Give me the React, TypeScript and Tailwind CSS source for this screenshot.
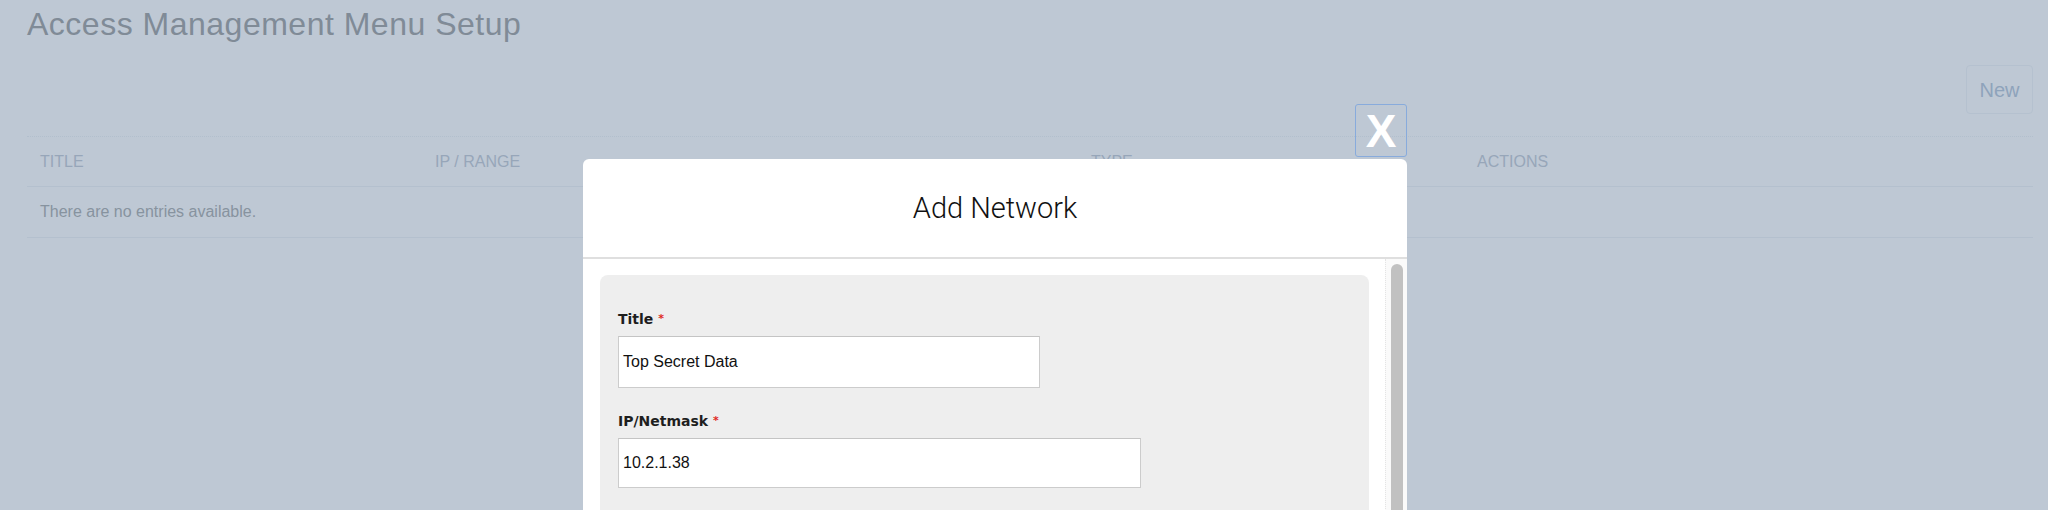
import React from 'react';

const columns = [
  { label: 'TITLE', width: 'w-[395px]' },
  { label: 'IP / RANGE', width: 'w-[656px]' },
  { label: 'TYPE', width: 'w-[386px]' },
  { label: 'ACTIONS', width: 'flex-1' },
];

const Field: React.FC<{ label: string; value: string; width: string; height: string; first?: boolean }> = ({
  label,
  value,
  width,
  height,
  first,
}) => (
  <div className={first ? '' : 'mt-[23px]'}>
    <div className="font-['DejaVu_Sans',Verdana,sans-serif] text-[14px] leading-[20px] font-bold text-[#1e1e1e]">
      {label} <span className="text-[11px] align-top text-[#e0281e]">*</span>
    </div>
    <div
      className={`mt-[7px] ${width} ${height} flex items-center bg-white border border-[#cccccc] border-t-[#c4c4c4] pl-[4px] text-[16px] text-[#111]`}
    >
      {value}
    </div>
  </div>
);

export default function App() {
  return (
    <div className="relative h-screen overflow-hidden bg-[#bec8d4] font-['Liberation_Sans',Arial,sans-serif]">
      <div className="pl-[27px] pr-[15px] pt-[5px]">
        <h1 className="text-[32px] leading-[38px] tracking-[0.5px] text-[#808b97]">Access Management Menu Setup</h1>

        <div className="mt-[22px] flex justify-end">
          <button className="h-[49px] w-[67px] rounded-[4px] border border-[#b5c1cf] text-[20px] text-[#8ea3bb]">
            New
          </button>
        </div>

        <div className="mt-[22px] border-t border-dotted border-[#b2bfcd]">
          <div className="flex h-[50px] items-center border-b border-[#b4c0ce] text-[16px] text-[#97a6b9]">
            {columns.map((c) => (
              <div key={c.label} className={`${c.width} px-[13px]`}>
                {c.label}
              </div>
            ))}
          </div>
          <div className="flex h-[51px] items-center border-b border-[#b4c0ce] px-[13px] text-[16px] text-[#87939f]">
            There are no entries available.
          </div>
        </div>
      </div>

      {/* modal dialog */}
      <div className="absolute left-[583px] top-[159px] w-[824px] h-[420px] rounded-t-[6px] bg-white">
        <button className="absolute -top-[55px] right-0 flex h-[53px] w-[52px] items-center justify-center rounded-[3px] border border-[#88abdc] text-[46px] font-bold leading-none text-white">
          X
        </button>

        <div className="flex h-[100px] items-center justify-center border-b-2 border-[#dfdfdf] pt-[2px]">
          <h2 className="font-['Roboto',sans-serif] text-[29px] font-light text-[#111]">Add Network</h2>
        </div>

        <div className="flex h-[320px]">
          <div className="flex-1 pl-[17px] pr-[16px] pt-[16px]">
            <div className="h-[300px] rounded-[8px] bg-[#eeeeee] pl-[18px] pt-[34px]">
              <Field first label="Title" value="Top Secret Data" width="w-[422px]" height="h-[52px]" />
              <Field label="IP/Netmask" value="10.2.1.38" width="w-[523px]" height="h-[50px]" />
            </div>
          </div>
          <div className="w-[22px] border-l border-dotted border-[#e4e4e4] bg-[#fafafa] pt-[5px] flex justify-center">
            <div className="h-[300px] w-[12px] rounded-full bg-[#c1c1c1]" />
          </div>
        </div>
      </div>
    </div>
  );
}
